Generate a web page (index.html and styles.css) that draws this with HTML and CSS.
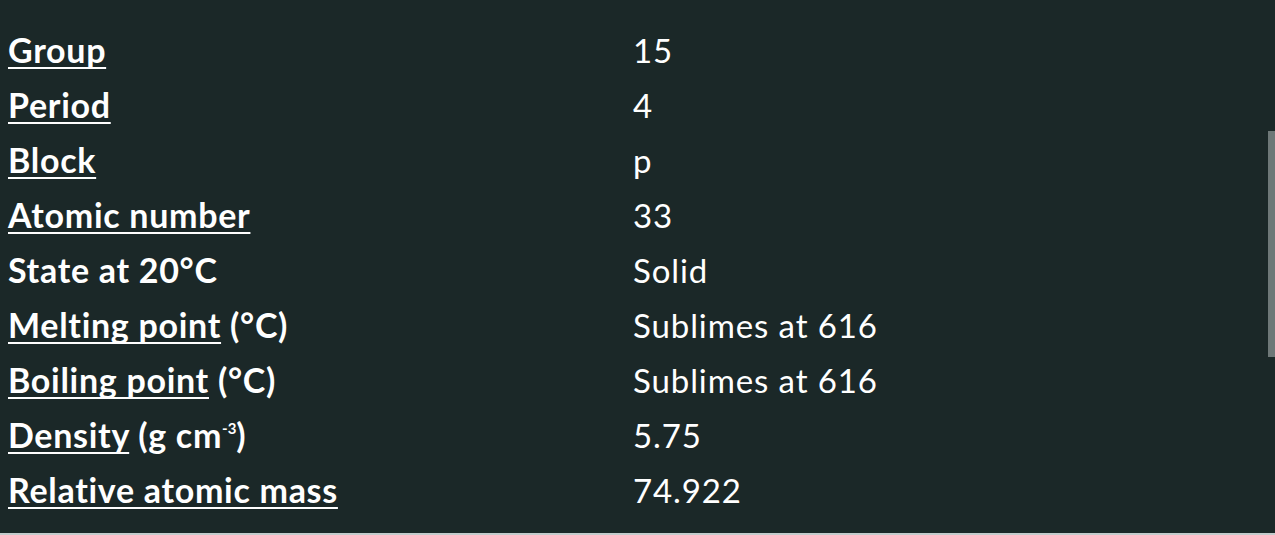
FILE: index.html
```html
<!DOCTYPE html>
<html>
<head>
<meta charset="utf-8">
<link rel="stylesheet" href="styles.css">
</head>
<body>
<div class="panel">
  <div class="props">
    <div class="label"><a href="#">Group</a></div><div class="value">15</div>
    <div class="label"><a href="#">Period</a></div><div class="value">4</div>
    <div class="label"><a href="#">Block</a></div><div class="value">p</div>
    <div class="label"><a href="#">Atomic number</a></div><div class="value">33</div>
    <div class="label">State at 20°C</div><div class="value">Solid</div>
    <div class="label"><a href="#">Melting point</a> (°C)</div><div class="value">Sublimes at 616</div>
    <div class="label"><a href="#">Boiling point</a> (°C)</div><div class="value">Sublimes at 616</div>
    <div class="label"><a href="#">Density</a> (g cm<sup>-3</sup>)</div><div class="value">5.75</div>
    <div class="label"><a href="#">Relative atomic mass</a></div><div class="value">74.922</div>
  </div>
  <div class="scrollbar"></div>
</div>
</body>
</html>
```
FILE: styles.css
```css
html, body {
  margin: 0;
  padding: 0;
  background: #1b2828;
}
body {
  width: 1275px;
  height: 535px;
  overflow: hidden;
  font-family: Lato, "Noto Sans", sans-serif;
  color: #ffffff;
}
.panel {
  position: relative;
  height: 533px;
  border-bottom: 2px solid #c3cccc;
}
.props {
  display: grid;
  grid-template-columns: 625px 1fr;
  padding: 22px 0 0 8px;
  grid-auto-rows: 55px;
  align-items: center;
}
.label {
  font-size: 34px;
  font-weight: 700;
  letter-spacing: 0.7px;
  white-space: nowrap;
}
.label a {
  color: #ffffff;
  text-decoration: underline;
  text-decoration-thickness: 2px;
  text-underline-offset: 4px;
  text-decoration-skip-ink: none;
}
.label sup {
  font-size: 15px;
  vertical-align: 14px;
  line-height: 0;
  letter-spacing: 0;
}
.value {
  font-size: 33px;
  font-weight: 400;
  letter-spacing: 0.9px;
}
.scrollbar {
  position: absolute;
  right: 0;
  top: 131px;
  width: 7px;
  height: 226px;
  background: #6e7878;
}
```
